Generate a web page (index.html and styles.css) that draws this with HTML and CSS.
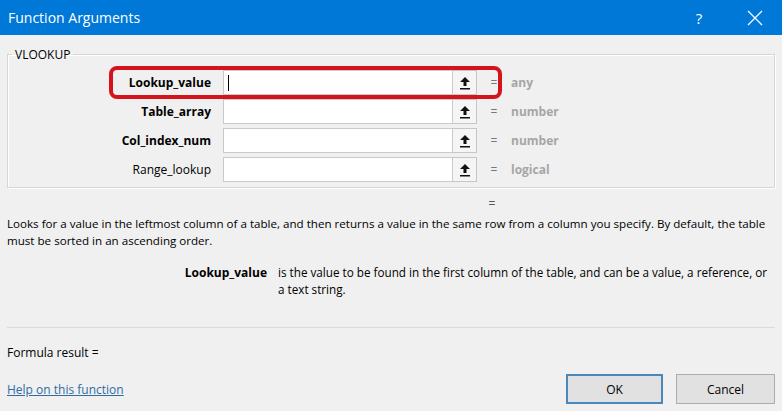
FILE: index.html
```html
<!DOCTYPE html>
<html lang="en">
<head>
  <meta charset="UTF-8" />
  <title>Function Arguments</title>
  <link rel="stylesheet" href="styles.css">
</head>
<body>

<div class="dialog">
  <!-- Title bar -->
  <div class="titlebar">
    <span class="title">Function Arguments</span>
    <span class="help-btn">?</span>
    <span class="close-btn">
      <svg width="16" height="16" viewBox="0 0 16 16"><path d="M1 1 L15 15 M15 1 L1 15" stroke="#fff" stroke-width="1.3" fill="none"/></svg>
    </span>
  </div>

  <div class="content">
    <fieldset class="args-box">
      <legend>VLOOKUP</legend>

      <div class="arg-row">
        <div class="highlight"></div>
        <label class="arg-label req">Lookup_value</label>
        <div class="arg-input"><span class="caret"></span></div>
        <button class="ref-btn"><svg width="12" height="14" viewBox="0 0 12 14"><path d="M6 1 L11 6 L7.5 6 L7.5 10 L4.5 10 L4.5 6 L1 6 Z" fill="#111"/><rect x="1" y="12" width="10" height="1.5" fill="#111"/></svg></button>
        <span class="eq">=</span>
        <span class="arg-type">any</span>
      </div>

      <div class="arg-row">
        <label class="arg-label req">Table_array</label>
        <div class="arg-input"></div>
        <button class="ref-btn"><svg width="12" height="14" viewBox="0 0 12 14"><path d="M6 1 L11 6 L7.5 6 L7.5 10 L4.5 10 L4.5 6 L1 6 Z" fill="#111"/><rect x="1" y="12" width="10" height="1.5" fill="#111"/></svg></button>
        <span class="eq">=</span>
        <span class="arg-type">number</span>
      </div>

      <div class="arg-row">
        <label class="arg-label req">Col_index_num</label>
        <div class="arg-input"></div>
        <button class="ref-btn"><svg width="12" height="14" viewBox="0 0 12 14"><path d="M6 1 L11 6 L7.5 6 L7.5 10 L4.5 10 L4.5 6 L1 6 Z" fill="#111"/><rect x="1" y="12" width="10" height="1.5" fill="#111"/></svg></button>
        <span class="eq">=</span>
        <span class="arg-type">number</span>
      </div>

      <div class="arg-row">
        <label class="arg-label">Range_lookup</label>
        <div class="arg-input"></div>
        <button class="ref-btn"><svg width="12" height="14" viewBox="0 0 12 14"><path d="M6 1 L11 6 L7.5 6 L7.5 10 L4.5 10 L4.5 6 L1 6 Z" fill="#111"/><rect x="1" y="12" width="10" height="1.5" fill="#111"/></svg></button>
        <span class="eq">=</span>
        <span class="arg-type">logical</span>
      </div>
    </fieldset>

    <div class="result-eq">=</div>

    <p class="func-desc">Looks for a value in the leftmost column of a table, and then returns a value in the same row from a column you specify. By default, the table<br>must be sorted in an ascending order.</p>

    <div class="arg-desc">
      <span class="arg-desc-name">Lookup_value</span>
      <span class="arg-desc-text">is the value to be found in the first column of the table, and can be a value, a reference, or<br>a text string.</span>
    </div>

    <hr class="sep">

    <div class="formula-result">Formula result =</div>

    <div class="footer">
      <a href="#" class="help-link">Help on this function</a>
      <div class="buttons">
        <button class="btn btn-ok">OK</button>
        <button class="btn">Cancel</button>
      </div>
    </div>
  </div>
</div>

</body>
</html>
```

FILE: styles.css
```css
* { margin: 0; padding: 0; box-sizing: border-box; }

body {
  font-family: "Open Sans", "Noto Sans", sans-serif;
  font-size: 12px;
  color: #000;
  background: #f0f0f0;
  width: 782px;
  height: 411px;
  overflow: hidden;
}

/* Title bar */
.titlebar {
  height: 35px;
  background: #0078d7;
  color: #fff;
  display: flex;
  align-items: center;
  padding-left: 8px;
}

.title {
  font-size: 14px;
  flex: 1;
}

.help-btn {
  font-size: 15px;
  width: 20px;
  text-align: center;
  margin-right: 38px;
}

.close-btn {
  width: 16px;
  height: 16px;
  margin-right: 19px;
}

/* Content */
.content {
  padding: 0 7px;
}

.args-box {
  margin-top: 11px;
  border: 1px solid #d6d6d6;
  box-shadow: inset 1px 1px 0 #fff, 1px 1px 0 #fff;
  padding: 7px 0 5px 0;
  height: 142px;
}

.args-box legend {
  margin-left: 4px;
  padding: 0 3px;
  font-size: 12px;
}

.arg-row {
  position: relative;
  display: flex;
  align-items: center;
  height: 25px;
  margin-bottom: 4px;
}

.highlight {
  position: absolute;
  left: 101px;
  top: -4px;
  width: 393px;
  height: 33px;
  border: 4px solid #d5131c;
  border-radius: 8px;
  pointer-events: none;
}

.arg-label {
  width: 204px;
  text-align: right;
  padding-right: 1px;
  font-size: 12px;
}

.arg-label.req { font-weight: bold; }

.arg-input {
  margin-left: 11px;
  width: 230px;
  height: 25px;
  background: #fff;
  border: 1px solid #cacaca;
  display: flex;
  align-items: center;
  padding-left: 4px;
}

.caret {
  width: 1px;
  height: 16px;
  background: #000;
}

.ref-btn {
  width: 24px;
  height: 25px;
  background: #f5f5f5;
  border: 1px solid #c6c6c6;
  border-left: none;
  display: flex;
  align-items: center;
  justify-content: center;
}

.eq {
  width: 34px;
  text-align: center;
  color: #777;
}

.arg-type {
  color: #a6a6a6;
  font-weight: bold;
  font-size: 12px;
}

.result-eq {
  margin-top: 7px;
  margin-left: 479px;
  color: #555;
  width: 12px;
  text-align: center;
  line-height: 17px;
}

.func-desc {
  line-height: 17px;
  margin-top: 3px;
  white-space: nowrap;
  font-size: 11.6px;
}

.arg-desc {
  display: flex;
  margin-top: 15px;
  line-height: 17px;
  font-size: 11.7px;
}

.arg-desc-name {
  width: 260px;
  text-align: right;
  font-weight: bold;
  font-size: 12px;
}

.arg-desc-text {
  margin-left: 11px;
  white-space: nowrap;
}

.sep {
  border: none;
  border-top: 1px solid #dadada;
  margin-top: 29px;
}

.formula-result {
  margin-top: 16px;
  line-height: 17px;
}

.footer {
  display: flex;
  align-items: center;
  justify-content: space-between;
  margin-top: 13px;
}

.help-link {
  color: #2e6da4;
  text-decoration: underline;
}

.buttons {
  display: flex;
  gap: 13px;
}

.btn {
  font-family: inherit;
  font-size: 12px;
  width: 99px;
  height: 30px;
  background: #e1e1e1;
  border: 1px solid #adadad;
}

.btn-ok {
  border: 2px solid #4a87ba;
  width: 97px;
}
```
